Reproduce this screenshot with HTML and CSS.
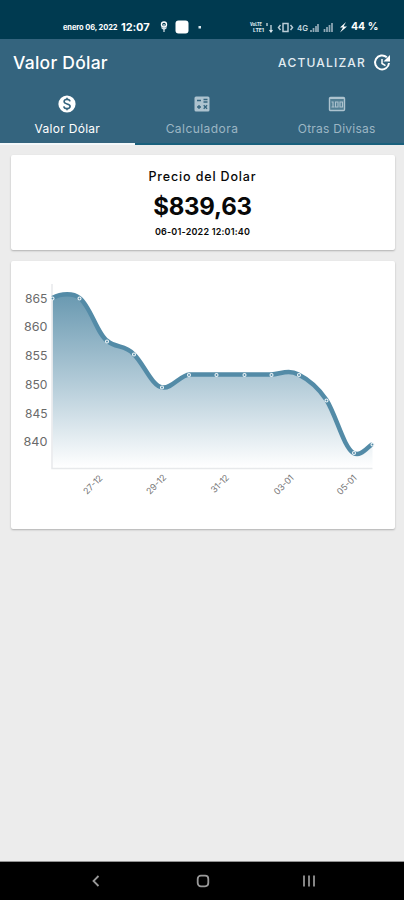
FILE: index.html
```
<!DOCTYPE html>
<html lang="es">
  <head>
    <title>Valor Dólar</title>
    <meta charset="UTF-8">
    <meta name="viewport" content="width=device-width, initial-scale=1">
    <link rel="stylesheet" href="styles.css">
  </head>
  <body>
    <div class="status-bar">
      <span class="status-date">enero 06, 2022</span>
      <span class="status-time">12:07</span>
      <svg class="status-left-icons" width="46" height="16" viewBox="0 0 46 16">
        <circle cx="7" cy="5.500" r="2.500" fill="none" stroke="#fff" stroke-width="1.400"/>
        <path d="M7 5v8M4.500 8.500L7 10.500l2.500-2" fill="none" stroke="#dce8ee" stroke-width="1.200"/>
        <rect x="18.500" y="1.500" width="13" height="13" rx="3" fill="#fff"/>
        <rect x="41.500" y="7" width="2.500" height="2.500" fill="#dce8ee"/>
      </svg>
      <svg class="status-right-icons" width="100" height="16" viewBox="0 0 100 16">
        <text class="status-tiny" x="1" y="7.200" textLength="12" lengthAdjust="spacingAndGlyphs">VoLTE</text>
        <text class="status-tiny" x="4" y="13" textLength="11" lengthAdjust="spacingAndGlyphs">LTE1</text>
        <path d="M18 4v3M22 6v7M20.500 11l1.500 2 1.500-2" fill="none" stroke="#dce8ee" stroke-width="1.200"/>
        <path d="M34 4.500h5v8h-5zM31.500 6L29.500 8.500l2 2.500M41.500 6l2 2.500-2 2.500" fill="none" stroke="#b9ccd6" stroke-width="1.500"/>
        <text class="status-4g" x="48" y="12" textLength="11" lengthAdjust="spacingAndGlyphs">4G</text>
        <path d="M62 13v-2M64.500 13v-4M67 13V7M69 13V5" stroke="#91aab7" stroke-width="1.700"/>
        <path d="M75.500 13v-3M78 13V8M80.500 13V6M83 13V4" stroke="#91aab7" stroke-width="1.700"/>
        <path d="M97 3l-6 5.500h3L91 13.500 98 7.500h-3.500z" fill="#fff"/>
      </svg>
      <span class="status-battery">44 %</span>
    </div>
    <header class="app-header">
      <div class="toolbar">
        <h1 class="toolbar-title">Valor Dólar</h1>
        <button class="refresh">
          <span class="refresh-label">ACTUALIZAR</span>
          <svg class="refresh-icon" width="20" height="20" viewBox="0 0 20 20">
            <path d="M14.800 4.300A7 7 0 1 0 17 10" fill="none" stroke="#fff" stroke-width="2"/>
            <path d="M18 2v6.500h-6.500z" fill="#fff"/>
            <path d="M10 6v4.500l3.500 2.200" fill="none" stroke="#fff" stroke-width="1.500"/>
          </svg>
        </button>
      </div>
      <nav class="tabs">
        <a class="tab tab-active">
          <svg width="18" height="18" viewBox="0 0 18 18">
            <circle cx="9" cy="9" r="8.600" fill="#fff"/>
            <path d="M12 6.300C11.700 4.900 10.500 4.400 9 4.400c-1.700 0-2.900.8-2.900 2.200 0 3.200 6 1.500 6 4.700 0 1.400-1.200 2.300-3.100 2.300-1.800 0-3-.8-3.200-2.300M9 2.700v1.800M9 13.500v1.800" fill="none" stroke="#34647e" stroke-width="1.600"/>
          </svg>
          <span class="tab-label label-valor">Valor Dólar</span>
        </a>
        <a class="tab">
          <svg width="18" height="18" viewBox="0 0 18 18">
            <rect x="1.500" y="1.500" width="15" height="15" rx="1.500" fill="#adc3cf"/>
            <path d="M4 5.500h4M10.500 4.500h4M10.500 7h4M4 12h4M6 10v4M10.700 10.200l3.400 3.600M14.100 10.200l-3.400 3.600" fill="none" stroke="#34647e" stroke-width="1.300"/>
          </svg>
          <span class="tab-label label-calc">Calculadora</span>
        </a>
        <a class="tab">
          <svg width="18" height="18" viewBox="0 0 18 18">
            <rect x="1.500" y="2.500" width="15" height="13" rx="1" fill="#527f94" stroke="#adc3cf" stroke-width="1.400"/>
            <path d="M1.500 3.500h15" stroke="#adc3cf" stroke-width="1"/>
            <path d="M3.500 7h1.500v5M3.500 12h3M7.500 7h2.500v5H7.500zM12 7h2.500v5H12z" fill="none" stroke="#adc3cf" stroke-width="1.100"/>
          </svg>
          <span class="tab-label label-divisas">Otras Divisas</span>
        </a>
      </nav>
    </header>
    <main class="content">
      <section class="card price-card">
        <h2 class="price-title">Precio del Dolar</h2>
        <div class="price-value">$839,63</div>
        <div class="price-date">06-01-2022 12:01:40</div>
      </section>
      <section class="card chart-card">
        <svg class="chart" width="384" height="268" viewBox="10.500 261 384 268">
          <defs>
            <linearGradient id="area-fill" x1="0" y1="293" x2="0" y2="468" gradientUnits="userSpaceOnUse">
              <stop offset="0" stop-color="#6898b0"/>
              <stop offset="0.500" stop-color="#b1cad7"/>
              <stop offset="1" stop-color="#fff"/>
            </linearGradient>
          </defs>
          <path d="M52 298C61 293 73 293 79 298C90 306 97 335 107 341C115 348 125 345 133 354C143 363 151 386 162 387.500C171 389 180 375 189 374.500H271C280 374 288 369 298 374.500C309 380 318 388 326 400C336 416 343 447 353 453C360 457 366 448 372 444V468H52Z" fill="url(#area-fill)"/>
          <path class="axis" d="M51.500 284V468.500H372"/>
          <path class="line" d="M52 298C61 293 73 293 79 298C90 306 97 335 107 341C115 348 125 345 133 354C143 363 151 386 162 387.500C171 389 180 375 189 374.500H271C280 374 288 369 298 374.500C309 380 318 388 326 400C336 416 343 447 353 453C360 457 366 448 372 444"/>
          <g class="points">
            <circle cx="52" cy="298.500" r="1.500"/>
            <circle cx="79" cy="298.500" r="1.500"/>
            <circle cx="106.500" cy="341.500" r="1.500"/>
            <circle cx="133.500" cy="354.500" r="1.500"/>
            <circle cx="161.500" cy="387.500" r="1.500"/>
            <circle cx="188.500" cy="375" r="1.500"/>
            <circle cx="216" cy="375" r="1.500"/>
            <circle cx="244" cy="375" r="1.500"/>
            <circle cx="271" cy="375" r="1.500"/>
            <circle cx="298.500" cy="375" r="1.500"/>
            <circle cx="326" cy="400.500" r="1.500"/>
            <circle cx="353.500" cy="453" r="1.500"/>
            <circle cx="372" cy="444.500" r="1.500"/>
          </g>
          <g class="y-labels">
            <text x="24.500" y="302.500" textLength="22.500" lengthAdjust="spacingAndGlyphs">865</text>
            <text x="23.500" y="331" textLength="23.500" lengthAdjust="spacingAndGlyphs">860</text>
            <text x="24.500" y="360" textLength="22.500" lengthAdjust="spacingAndGlyphs">855</text>
            <text x="24.500" y="388.500" textLength="22.500" lengthAdjust="spacingAndGlyphs">850</text>
            <text x="24.500" y="417.500" textLength="22.500" lengthAdjust="spacingAndGlyphs">845</text>
            <text x="23" y="446" textLength="24" lengthAdjust="spacingAndGlyphs">840</text>
          </g>
          <g class="x-labels">
            <text transform="translate(86.500 495) rotate(-45)" textLength="23">27-12</text>
            <text transform="translate(149.500 495) rotate(-45)" textLength="24">29-12</text>
            <text transform="translate(214 493.500) rotate(-45)" textLength="21.500">31-12</text>
            <text transform="translate(277 495.500) rotate(-45)" textLength="24">03-01</text>
            <text transform="translate(340 495.500) rotate(-45)" textLength="24">05-01</text>
          </g>
        </svg>
      </section>
    </main>
    <footer class="nav-bar">
      <svg width="14" height="14" viewBox="0 0 14 14">
        <path d="M9.500 2L4.500 7l5 5" fill="none" stroke="#999" stroke-width="1.800"/>
      </svg>
      <svg width="14" height="14" viewBox="0 0 14 14">
        <rect x="1.700" y="1.700" width="10.600" height="10.600" rx="3.200" fill="none" stroke="#999" stroke-width="1.800"/>
      </svg>
      <svg width="14" height="14" viewBox="0 0 14 14">
        <path d="M2 1.500v11M7 1.500v11M12 1.500v11" stroke="#858585" stroke-width="2"/>
      </svg>
    </footer>
  </body>
</html>
```

FILE: styles.css
```
* {
	box-sizing: border-box;
}
body {
	margin: 0;
	height: 900px;
	display: flex;
	flex-direction: column;
	overflow: hidden;
	background-color: #ececec;
	font-family: Inter, "Open Sans", sans-serif;
}
/* phone status bar */
.status-bar {
	height: 39px;
	padding: 19px 0 0 63px;
	display: flex;
	background-color: #003a50;
	color: #fff;
	line-height: 16px;
	white-space: nowrap;
}
.status-date {
	width: 58px;
	padding-top: 1px;
	font-size: 7.5px;
	font-weight: 700;
	letter-spacing: -0.1px;
}
.status-time {
	width: 36px;
	font-size: 11px;
	font-weight: 700;
	letter-spacing: -0.1px;
}
.status-right-icons {
	margin-left: 46px;
}
.status-tiny {
	font-size: 4.5px;
	font-weight: 800;
	fill: #dce8ee;
}
.status-4g {
	font-size: 8px;
	font-weight: 600;
	fill: #c5d6de;
}
.status-battery {
	margin-left: 2px;
	font-size: 10.5px;
	font-weight: 700;
}
/* title and tabs */
.app-header {
	height: 106px;
	background-color: #34647e;
	border-bottom: 2px solid #19607c;
}
.toolbar {
	height: 47px;
	padding: 0 12px 0 13px;
	display: flex;
	align-items: center;
	justify-content: space-between;
	color: #fff;
}
.toolbar-title {
	margin: 0;
	font-size: 17.5px;
	font-weight: 500;
	letter-spacing: 0.25px;
}
.refresh {
	padding: 0;
	display: flex;
	align-items: center;
	gap: 6px;
	border: none;
	background: none;
	color: #e3edf2;
	font-family: inherit;
}
.refresh-label {
	font-size: 12px;
	font-weight: 500;
	letter-spacing: 1.2px;
}
.tabs {
	height: 59px;
	display: flex;
}
.tab {
	flex: 1;
	padding-top: 9px;
	display: flex;
	flex-direction: column;
	align-items: center;
	gap: 8px;
	color: #9cb6c4;
}
.tab-active {
	color: #fff;
	border-bottom: 2px solid #f4f8fa;
}
.tab-label {
	font-size: 12px;
	line-height: 16px;
	white-space: nowrap;
}
.label-valor {
	letter-spacing: 0.3px;
}
.label-calc {
	letter-spacing: 0.45px;
}
.label-divisas {
	letter-spacing: 0.25px;
}
/* cards */
.content {
	flex: 1;
	padding: 10px 9.5px 0 10.5px;
	display: flex;
	flex-direction: column;
	gap: 11px;
}
.card {
	background-color: #fff;
	border-radius: 2px;
	box-shadow: 0 1px 2px rgba(0, 0, 0, 0.25);
}
.price-card {
	height: 95px;
	padding-top: 13px;
	text-align: center;
	color: #080808;
}
.price-title {
	margin: 0;
	font-size: 12.5px;
	font-weight: 500;
	line-height: 18px;
	letter-spacing: 0.85px;
}
.price-value {
	margin-top: 6px;
	font-size: 24px;
	font-weight: 700;
	line-height: 30px;
	letter-spacing: -0.2px;
}
.price-date {
	margin-top: 3px;
	font-size: 9px;
	font-weight: 600;
	line-height: 14px;
	letter-spacing: 0.2px;
}
.chart-card {
	height: 268px;
}
.chart {
	display: block;
}
.axis {
	fill: none;
	stroke: #e7e9eb;
	stroke-width: 1.5;
}
.line {
	fill: none;
	stroke: #538ba7;
	stroke-width: 4.5;
}
.points circle {
	fill: #538ba7;
	stroke: #eef5f8;
	stroke-width: 1.1;
}
.y-labels text {
	font-size: 12px;
	fill: #6a6a6a;
}
.x-labels text {
	font-size: 9px;
	fill: #777;
}
/* android buttons */
.nav-bar {
	height: 39px;
	padding: 0 88px 0 89px;
	display: flex;
	align-items: center;
	justify-content: space-between;
	background-color: #000;
	border-top: 1px solid #929292;
}
```
